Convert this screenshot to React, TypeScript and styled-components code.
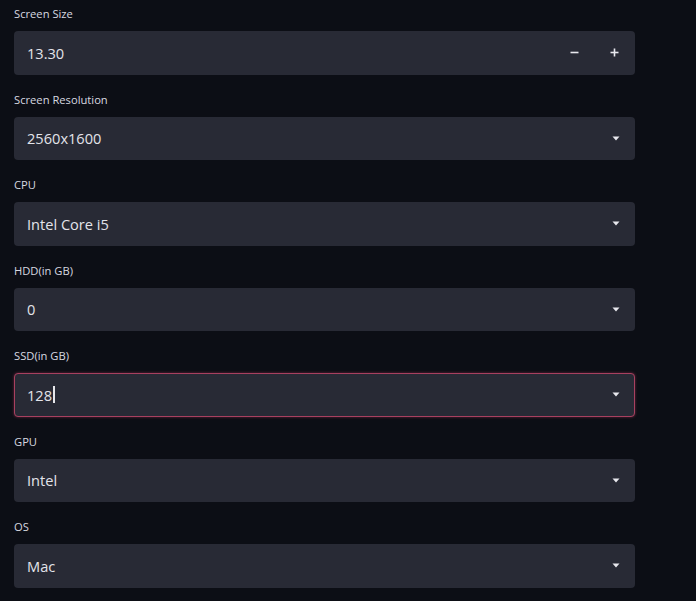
import React from "react";
import styled, { createGlobalStyle } from "styled-components";

const Global = createGlobalStyle`
  html, body { margin: 0; padding: 0; background: #0c0e15; }
  body { font-family: "Source Sans Pro", "Open Sans", "Noto Sans", sans-serif; }
`;

const Page = styled.div`
  width: 696px;
  height: 601px;
  box-sizing: border-box;
  padding: 7px 0 0 14px;
  display: flex;
  flex-direction: column;
  gap: 18px;
  background: #0c0e15;
  overflow: hidden;
`;

const Field = styled.div`
  display: flex;
  flex-direction: column;
  gap: 10px;
  width: 621px;
`;

const Label = styled.div`
  font-size: 11.2px;
  line-height: 14px;
  height: 14px;
  color: #d8d9e0;
`;

const Box = styled.div<{ $focused?: boolean; $stepper?: boolean }>`
  height: 43.5px;
  box-sizing: border-box;
  border-radius: 4px;
  background: #282a35;
  border: ${(p) => (p.$focused ? "1.5px solid #a8405f" : "1px solid transparent")};
  box-shadow: ${(p) => (p.$focused ? "0 0 3px rgba(200,60,100,0.5)" : "none")};
  display: flex;
  align-items: center;
  padding: ${(p) => (p.$stepper ? "0 0 0 12px" : "0 14px 0 12px")};
  color: #e3e4ea;
  font-size: 14.6px;
`;

const Value = styled.div`
  flex: 1;
  display: flex;
  align-items: center;
`;

const Caret = styled.span`
  display: inline-block;
  width: 1.5px;
  height: 17px;
  background: #e6e6ea;
  margin-left: 1px;
`;

const StepBtn = styled.div`
  width: 40px;
  display: flex;
  justify-content: center;
  align-items: center;
  color: #e8e8ee;
`;

const Arrow = () => (
  <svg width="8" height="5" viewBox="0 0 8 5">
    <path d="M0.5 0.5 L7.5 0.5 L4 4.5 Z" fill="#e8e8ee" />
  </svg>
);

const Minus = () => (
  <svg width="9" height="9" viewBox="0 0 9 9">
    <rect x="0.5" y="3.7" width="8" height="1.6" fill="#e8e8ee" />
  </svg>
);

const Plus = () => (
  <svg width="9" height="9" viewBox="0 0 9 9">
    <rect x="0.5" y="3.7" width="8" height="1.6" fill="#e8e8ee" />
    <rect x="3.7" y="0.5" width="1.6" height="8" fill="#e8e8ee" />
  </svg>
);

const selects = [
  { label: "Screen Resolution", value: "2560x1600" },
  { label: "CPU", value: "Intel Core i5" },
  { label: "HDD(in GB)", value: "0" },
  { label: "SSD(in GB)", value: "128", focused: true },
  { label: "GPU", value: "Intel" },
  { label: "OS", value: "Mac" },
];

export default function App() {
  return (
    <>
      <Global />
      <Page>
        <Field>
          <Label>Screen Size</Label>
          <Box $stepper>
            <Value>13.30</Value>
            <StepBtn>
              <Minus />
            </StepBtn>
            <StepBtn>
              <Plus />
            </StepBtn>
          </Box>
        </Field>
        {selects.map((s) => (
          <Field key={s.label}>
            <Label>{s.label}</Label>
            <Box $focused={s.focused}>
              <Value>
                {s.value}
                {s.focused && <Caret />}
              </Value>
              <Arrow />
            </Box>
          </Field>
        ))}
      </Page>
    </>
  );
}
